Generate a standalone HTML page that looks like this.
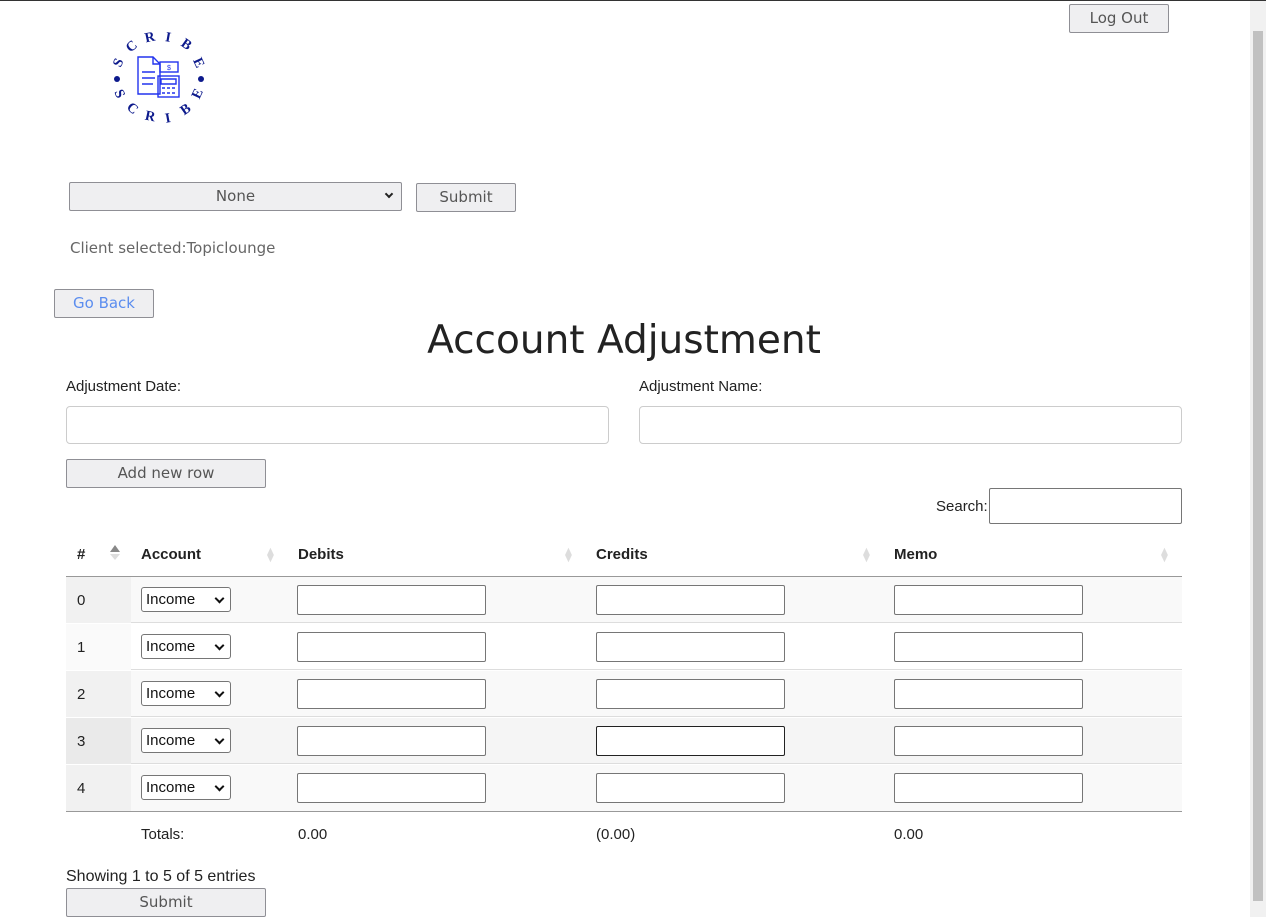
<!DOCTYPE html>
<html><head><style>
*{box-sizing:border-box;margin:0;padding:0}
body{width:1266px;height:916px;overflow:hidden;background:#fff;font-family:"Liberation Sans",sans-serif;position:relative;border-top:1px solid #333}
.a{position:absolute}
.m{font-family:"DejaVu Sans",sans-serif}
.btn{position:absolute;background:#efeff1;border:1px solid #8f8f95;border-radius:2px;color:#555;font-size:15px;text-align:center;line-height:26px;font-family:"DejaVu Sans",sans-serif}
.inp{position:absolute;border:1px solid #ccc;border-radius:4px;background:#fff}
.ti{position:absolute;width:189px;height:30px;border:1px solid #767676;border-radius:2px;background:#fff}
.sel{position:absolute;width:90px;height:25px;border:1px solid #767676;border-radius:3px;background:#fff;font-size:15px;line-height:23px;padding-left:4px;color:#111}
.sel:after{content:"";position:absolute;right:7px;top:7px;width:5px;height:5px;border-right:2px solid #111;border-bottom:2px solid #111;transform:rotate(45deg)}
.t{position:absolute;font-size:15px;color:#222}
.h{position:absolute;font-size:15px;font-weight:bold;color:#222;top:545px}
.dia{position:absolute;top:545px;color:#ddd;font-size:14px}
</style></head><body>
<div class="a" style="right:0;top:0;width:16px;height:916px;background:#f1f1f1"></div>
<div class="a" style="right:3px;top:30px;width:10px;height:870px;background:#c1c1c1"></div>

<svg class="a" style="left:103px;top:26px" width="114" height="104" viewBox="-2 -2 114 104">
<g fill="#0d1a8c" font-family="Liberation Serif" font-weight="bold" font-size="14" text-anchor="middle" dominant-baseline="central">
<text x="14" y="34" transform="rotate(-65 14 34)">S</text>
<text x="27" y="18" transform="rotate(-40 27 18)">C</text>
<text x="45" y="9" transform="rotate(-12 45 9)">R</text>
<text x="63" y="9" transform="rotate(10 63 9)">I</text>
<text x="81" y="16" transform="rotate(35 81 16)">B</text>
<text x="93" y="34" transform="rotate(65 93 34)">E</text>
<text x="14" y="65" transform="rotate(65 14 65)">S</text>
<text x="27" y="80" transform="rotate(40 27 80)">C</text>
<text x="45" y="88" transform="rotate(12 45 88)">R</text>
<text x="63" y="90" transform="rotate(-10 63 90)">I</text>
<text x="81" y="81" transform="rotate(-35 81 81)">B</text>
<text x="93" y="65" transform="rotate(-65 93 65)">E</text>
<circle cx="12" cy="50" r="3"/><circle cx="96" cy="50" r="3"/>
</g>
<g fill="none" stroke="#2233ee" stroke-width="1.4">
<path d="M33 28h15l7 7v30h-22z"/><path d="M48 28v7h7"/><path d="M37 43h13M37 49h13M37 55h11"/>
<rect x="55" y="33" width="18" height="10"/><text x="64" y="41" font-size="7" fill="#2233ee" stroke="none" text-anchor="middle">$</text>
<rect x="53" y="47" width="21" height="21"/>
<path d="M56 50h15v5h-15zM57 59h3M62 59h3M67 59h3M57 64h3M62 64h3M67 64h3"/>
</g></svg>

<div class="btn" style="left:1069px;top:3px;width:100px;height:29px;line-height:27px">Log Out</div>
<div class="a m" style="left:69px;top:181px;width:333px;height:29px;border:1px solid #8f8f95;border-radius:2px;background:#efeff1;color:#555;text-align:center;line-height:27px;font-size:15px">None</div>
<div class="a" style="left:386px;top:190px;width:6px;height:6px;border-right:2px solid #222;border-bottom:2px solid #222;transform:rotate(45deg)"></div>
<div class="btn" style="left:416px;top:182px;width:100px;height:29px">Submit</div>
<div class="a m" style="left:70px;top:238px;font-size:15px;color:#666">Client selected:Topiclounge</div>
<div class="btn" style="left:54px;top:288px;width:100px;height:29px;color:#5b8def">Go Back</div>
<div class="a m" style="left:0;width:1248px;top:317px;text-align:center;font-size:39px;color:#222">Account Adjustment</div>
<div class="t" style="left:66px;top:377px">Adjustment Date:</div>
<div class="t" style="left:639px;top:377px">Adjustment Name:</div>
<div class="inp" style="left:66px;top:405px;width:543px;height:38px"></div>
<div class="inp" style="left:639px;top:405px;width:543px;height:38px"></div>
<div class="btn" style="left:66px;top:458px;width:200px;height:29px">Add new row</div>
<div class="t" style="left:936px;top:497px">Search:</div>
<div class="a" style="left:989px;top:487px;width:193px;height:36px;border:1px solid #767676;border-radius:2px"></div>

<div class="h" style="left:77px">#</div>
<div class="a" style="left:110px;top:544px;width:0;height:0;border:5px solid transparent;border-bottom:7px solid #888;border-top:0"></div>
<div class="a" style="left:110px;top:553px;width:0;height:0;border:5px solid transparent;border-top:6px solid #ddd;border-bottom:0"></div>
<div class="h" style="left:141px">Account</div><div class="dia" style="left:267px">⧫</div>
<div class="h" style="left:298px">Debits</div><div class="dia" style="left:565px">⧫</div>
<div class="h" style="left:596px">Credits</div><div class="dia" style="left:863px">⧫</div>
<div class="h" style="left:894px">Memo</div><div class="dia" style="left:1161px">⧫</div>
<div class="a" style="left:66px;top:575px;width:1116px;height:1px;background:#999"></div>

<div class="a" style="left:66px;top:576px;width:1116px;height:46px;background:#f9f9f9;border-bottom:1px solid #ddd"></div>
<div class="a" style="left:66px;top:576px;width:65px;height:46px;background:#f1f1f1"></div>
<div class="a" style="left:66px;top:623px;width:1116px;height:46px;border-bottom:1px solid #ddd"></div>
<div class="a" style="left:66px;top:623px;width:65px;height:46px;background:#fafafa"></div>
<div class="a" style="left:66px;top:670px;width:1116px;height:46px;background:#f9f9f9;border-bottom:1px solid #ddd"></div>
<div class="a" style="left:66px;top:670px;width:65px;height:46px;background:#f1f1f1"></div>
<div class="a" style="left:66px;top:717px;width:1116px;height:46px;background:#f5f5f5;border-bottom:1px solid #ddd"></div>
<div class="a" style="left:66px;top:717px;width:65px;height:46px;background:#eaeaea"></div>
<div class="a" style="left:66px;top:764px;width:1116px;height:46px;background:#f9f9f9"></div>
<div class="a" style="left:66px;top:764px;width:65px;height:46px;background:#f1f1f1"></div>
<div class="a" style="left:66px;top:810px;width:1116px;height:1px;background:#999"></div>

<div class="t" style="left:77px;top:591px">0</div>
<div class="t" style="left:77px;top:638px">1</div>
<div class="t" style="left:77px;top:685px">2</div>
<div class="t" style="left:77px;top:732px">3</div>
<div class="t" style="left:77px;top:779px">4</div>

<div class="sel" style="left:141px;top:586px">Income</div>
<div class="sel" style="left:141px;top:633px">Income</div>
<div class="sel" style="left:141px;top:680px">Income</div>
<div class="sel" style="left:141px;top:727px">Income</div>
<div class="sel" style="left:141px;top:774px">Income</div>

<div class="ti" style="left:297px;top:584px"></div><div class="ti" style="left:596px;top:584px"></div><div class="ti" style="left:894px;top:584px"></div>
<div class="ti" style="left:297px;top:631px"></div><div class="ti" style="left:596px;top:631px"></div><div class="ti" style="left:894px;top:631px"></div>
<div class="ti" style="left:297px;top:678px"></div><div class="ti" style="left:596px;top:678px"></div><div class="ti" style="left:894px;top:678px"></div>
<div class="ti" style="left:297px;top:725px"></div><div class="ti" style="left:596px;top:725px;border-color:#222"></div><div class="ti" style="left:894px;top:725px"></div>
<div class="ti" style="left:297px;top:772px"></div><div class="ti" style="left:596px;top:772px"></div><div class="ti" style="left:894px;top:772px"></div>

<div class="t" style="left:141px;top:825px">Totals:</div>
<div class="t" style="left:298px;top:825px">0.00</div>
<div class="t" style="left:596px;top:825px">(0.00)</div>
<div class="t" style="left:894px;top:825px">0.00</div>
<div class="t" style="left:66px;top:867px;font-size:16px">Showing 1 to 5 of 5 entries</div>
<div class="btn" style="left:66px;top:887px;width:200px;height:29px">Submit</div>
</body></html>
